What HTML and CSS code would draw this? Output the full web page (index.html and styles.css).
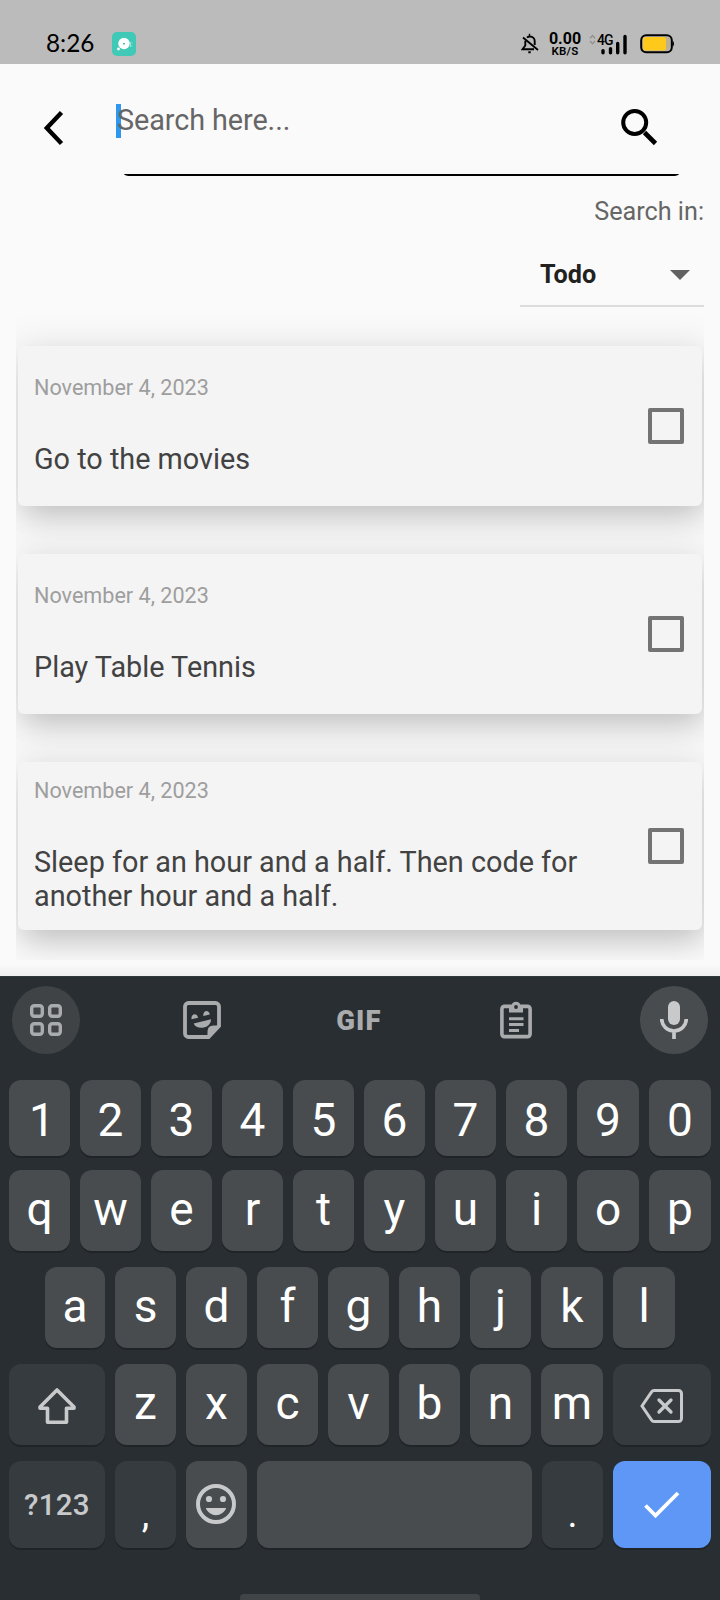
FILE: index.html
```html
<!DOCTYPE html>
<html lang="en">
<head>
<meta charset="utf-8">
<title>Search</title>
<link rel="stylesheet" href="styles.css">
</head>
<body>
<div class="status">
  <span class="clock">8:26</span>
  <svg class="app-badge" width="24" height="24" viewBox="0 0 24 24"><rect width="24" height="24" rx="5" fill="#40c9b7"/><circle cx="12" cy="11.500" r="5.700" fill="#fff"/><circle cx="6.500" cy="17" r="1.400" fill="#fff"/><rect x="11" y="11" width="2" height="1.500" fill="#40c9b7"/><path d="M18.500 10v5M20 10.500v1M20 13.500v1" stroke="#9be3da" stroke-width="1"/></svg>
  <svg class="bell" width="18" height="22" viewBox="0 0 18 22" fill="none" stroke="#000" stroke-width="1.900"><path d="M6 4.600C6.800 3.800 7.800 3.500 9 3.500c2.800 0 4.700 2 4.700 4.700v3.800M4.300 7.800v4.700L1.500 16.300H13M2 4.600 17 17M7.800 1.800h1.400M7.300 19.300h2.400"/></svg>
  <div class="speed"><b>0.00</b><small>KB/S</small></div>
  <svg class="updown" width="7" height="12" viewBox="0 0 7 12" fill="none" stroke="#909090" stroke-width="1.400"><path d="M1 4.200 3.500 1.500 6 4.200M1 7 3.500 9.700 6 7"/></svg>
  <div class="signal"><span class="net">4G</span>
    <svg width="30" height="22" viewBox="0 0 30 22"><path d="M6 19.800v-2.200M13.500 19.800v-4M20.700 19.800V10.500M28 19.800V3.500" stroke="#000" stroke-width="3.400" stroke-linecap="round"/></svg></div>
  <svg class="battery" width="35" height="20" viewBox="0 0 35 20"><rect x="1.200" y="1.200" width="30.600" height="17" rx="5" fill="none" stroke="#000" stroke-width="2"/><rect x="3" y="3" width="27" height="13.500" rx="3" fill="#bba66a" opacity=".5"/><rect x="3" y="3" width="23" height="13.500" rx="2.500" fill="#ffc91c"/><path d="M32.500 7c2 .5 2 5 0 5.500z"/></svg>
</div>

<main class="app">
  <header class="searchbar">
    <svg class="back" width="22" height="36" viewBox="0 0 22 36" fill="none" stroke="#000" stroke-width="4.400"><path d="M18.500 2.500 3.800 18 18.500 33.500"/></svg>
    <div class="field"><div class="input"><i class="caret"></i>Search here...</div><div class="underline"></div></div>
    <svg class="lens" width="38" height="38" viewBox="0 0 38 38" fill="none" stroke="#000" stroke-width="4"><circle cx="14.700" cy="14.500" r="11.500"/><path d="m24.500 24.500 11 11" stroke-width="4.600"/></svg>
  </header>
  <div class="scope">Search in:</div>
  <div class="select"><span>Todo</span><svg width="20" height="10" viewBox="0 0 20 10"><path d="M0 0h20L10 10z" fill="#616161"/></svg></div>
  <section class="list">
    <article class="card"><div><time>November 4, 2023</time><p>Go to the movies</p></div><i class="check"></i></article>
    <article class="card"><div><time>November 4, 2023</time><p>Play Table Tennis</p></div><i class="check"></i></article>
    <article class="card long"><div><time>November 4, 2023</time><p>Sleep for an hour and a half. Then code for another hour and a half.</p></div><i class="check"></i></article>
  </section>
</main>

<section class="keyboard">
  <div class="tools">
    <div class="tool round dim"><svg width="32" height="32" viewBox="0 0 32 32" fill="none" stroke="#a9abad" stroke-width="3.400"><rect x="1.700" y="1.700" width="10.600" height="10.600" rx="2.500"/><rect x="19.700" y="1.700" width="10.600" height="10.600" rx="2.500"/><rect x="1.700" y="19.700" width="10.600" height="10.600" rx="2.500"/><rect x="19.700" y="19.700" width="10.600" height="10.600" rx="2.500"/></svg></div>
    <div class="tool sticker"><svg width="38" height="38" viewBox="0 0 38 38"><path d="M5.500 2h27a3.500 3.500 0 0 1 3.500 3.500V25L25.500 36h-20A3.500 3.500 0 0 1 2 32.500v-27A3.500 3.500 0 0 1 5.500 2z" fill="none" stroke="#a9abad" stroke-width="3.800"/><path d="M24.500 37v-6.500q0-6 6-6H37zM8.500 18.300c-.7-5.800 5.500-6.800 6.600-1.500zM20.300 15c-.5-6.500 6-6.500 6.500-1.600zM10.700 22.600 28 18.200c.3 9.500-14.500 11.500-17.300 4.400z" fill="#a9abad"/></svg></div>
    <div class="tool gif">GIF</div>
    <div class="tool clip"><svg width="32" height="38" viewBox="0 0 32 38"><rect x="1.900" y="5.400" width="28.200" height="30.200" rx="2.500" fill="none" stroke="#a9abad" stroke-width="3.600"/><path d="M9 4.500h2.500a4.600 4.600 0 0 1 9 0H23v7H9zM9 16.200h14.500v3H9zM9 22h14.500v3H9zM9 28h10v3H9z" fill="#a9abad"/><circle cx="16" cy="6" r="1.900" fill="#292e32"/></svg></div>
    <div class="tool round"><svg width="28" height="40" viewBox="0 0 28 40"><rect x="8" y="1" width="12" height="24" rx="6" fill="#c8c9cb"/><path d="M1.700 19a12.300 12 0 0 0 24.600 0M14 31v8" fill="none" stroke="#c8c9cb" stroke-width="3.700"/></svg></div>
  </div>
  <div class="row digits"><b class="one">1</b><b>2</b><b>3</b><b>4</b><b>5</b><b>6</b><b>7</b><b>8</b><b class="wide">9</b><b class="wide">0</b></div>
  <div class="row"><b>q</b><b>w</b><b>e</b><b>r</b><b>t</b><b>y</b><b>u</b><b>i</b><b class="wide">o</b><b class="wide">p</b></div>
  <div class="row inset"><b class="narrow">a</b><b>s</b><b>d</b><b>f</b><b>g</b><b>h</b><b>j</b><b class="wide">k</b><b class="wide">l</b></div>
  <div class="row">
    <b class="side"><svg width="40" height="38" viewBox="0 0 40 38" fill="none" stroke="#c8c9cb" stroke-width="3.600" stroke-linejoin="round"><path d="M20 3 3 20v1.200h7.500V35.300h19V21.200H37V20z" /></svg></b>
    <b>z</b><b>x</b><b>c</b><b>v</b><b>b</b><b>n</b><b class="wide">m</b>
    <b class="side right"><svg width="44" height="36" viewBox="0 0 44 36" fill="none" stroke="#c8c9cb" stroke-width="3"><path d="M14 2.500h24.500a3 3 0 0 1 3 3v25a3 3 0 0 1-3 3H14q-1.500 0-2.400-1.300L2 18l9.600-14.200Q12.500 2.500 14 2.500z"/><path d="m19 12 12 12M31 12 19 24" stroke-width="3.300" stroke-linecap="round"/></svg></b>
  </div>
  <div class="row last">
    <b class="side sym">?123</b><b class="punct">,</b>
    <b class="emoji"><svg width="40" height="40" viewBox="0 0 40 40"><circle cx="20" cy="20" r="18" fill="none" stroke="#c8c9cb" stroke-width="4"/><g fill="#c8c9cb"><circle cx="13" cy="15" r="3.100"/><circle cx="27" cy="15" r="3.100"/><path d="M9.800 24h20.400c-3.500 9.500-16.900 9.500-20.400 0z"/></g></svg></b>
    <b class="space"></b><b class="punct">.</b>
    <b class="side right enter"><svg width="36" height="28" viewBox="0 0 36 28" fill="none" stroke="#fff" stroke-width="3.800"><path d="m1.500 14.500 10 10L34 2"/></svg></b>
  </div>
  <div class="home"></div>
</section>
</body>
</html>
```
FILE: styles.css
```css
* { box-sizing: border-box; }
body { margin: 0; width: 720px; height: 1600px; overflow: hidden; background: #fafafa; font-family: Roboto, sans-serif; display: flex; flex-direction: column; }
svg { display: block; flex: none; }

.status { height: 64px; flex: none; background: #bbb; display: flex; align-items: flex-start; color: #000; }
.clock { font: 24.3px/30px Lato, sans-serif; width: 66px; margin: 28px 0 0 46px; white-space: nowrap; }
.app-badge { margin-top: 32px; }
.bell { margin: 33px 0 0 385px; }
.speed { margin: 31px 0 0 9px; width: 34px; display: flex; flex-direction: column; align-items: center; }
.speed b { font-size: 16px; line-height: 15px; }
.speed small { font-size: 11.5px; line-height: 11px; font-weight: 600; letter-spacing: .2px; }
.updown { margin: 34px 0 0 7px; }
.signal { position: relative; margin: 33px 0 0; padding-left: 1px; }
.net { position: absolute; left: 1px; top: 0; font-size: 14px; line-height: 15px; font-weight: 500; letter-spacing: -1px; }
.battery { margin: 34px 0 0 13px; }

.app { height: 912px; flex: none; display: flex; flex-direction: column; background: linear-gradient(#fafafa 900px, #efefef); }
.searchbar { height: 112px; flex: none; display: flex; align-items: flex-start; }
.back { margin: 46px 0 0 43px; }
.field { width: 572px; margin: 39px 0 0 51px; }
.input { display: flex; height: 71px; padding-top: 1px; font-size: 28.8px; line-height: 33px; letter-spacing: -.08px; color: #666; white-space: nowrap; }
.caret { width: 5px; height: 34px; margin-right: -4px; background: #2f97f0; }
.underline { width: 555px; height: 2px; margin-left: 8px; background: #000; border-radius: 0 0 7px 7px / 0 0 2px 2px; }
.lens { margin: 44px 0 0 -68px; }
.scope { height: 60px; padding: 21px 16px 0 0; text-align: right; font-size: 25.2px; line-height: 30px; color: #666; }
.select { width: 184px; height: 71px; align-self: flex-end; margin-right: 16px; padding: 7px 14px 0 20px; border-bottom: 2px solid #dcdcdc; display: flex; align-items: center; justify-content: space-between; font-size: 25.2px; font-weight: 700; color: #212121; }
.select span { margin-top: 1px; }
.select svg { margin-top: 1px; }
.list { margin: 0 16px; height: 653px; padding: 39px 2px 0; overflow: hidden; display: flex; flex-direction: column; gap: 48px; }
.card { height: 160px; flex: none; padding: 29px 18px 0 16px; border-radius: 6px; background: #f4f4f4; display: flex; justify-content: space-between; box-shadow: 3px 14px 26px -6px rgba(0,0,0,.13), 2px 8px 38px 5px rgba(0,0,0,.13); }
.card time { display: block; font-size: 21.6px; line-height: 26px; color: #9e9e9e; }
.card p { width: 570px; margin: 41px 0 0; font-size: 28.8px; line-height: 34px; color: #424242; }
.card.long { height: 168px; padding-top: 16px; }
.check { width: 36px; height: 36px; flex: none; margin-top: 33px; border: 4px solid #737373; border-radius: 2px; }
.long .check { margin-top: 50px; }

.keyboard { height: 624px; flex: none; background: #292e32; border-top: 1px solid #303a39; display: flex; flex-direction: column; }
.tools { height: 103px; flex: none; padding: 9px 12px 0; display: flex; justify-content: space-between; }
.tool { width: 68px; height: 68px; display: flex; align-items: center; justify-content: center; }
.round { border-radius: 50%; background: #484c4e; }
.dim { background: #3f4345; }
.sticker, .clip { padding-right: 2px; }
.gif { padding-right: 2px; font-size: 27.5px; font-weight: 900; letter-spacing: 1.2px; color: #a9abad; }
.row { height: 81px; flex: none; margin: 0 9px 16px; display: flex; gap: 10px; }
.row b { width: 61px; flex: none; padding-bottom: 4px; display: flex; align-items: center; justify-content: center; background: #484c4e; border-radius: 12px; box-shadow: 0 2px 0 #1f2427; font-size: 46px; line-height: 54px; font-weight: 400; color: #fff; }
.row .wide { width: 62px; }
.row .narrow { width: 60px; }
.digits { height: 76px; margin-bottom: 14px; }
.row.digits b { padding: 3px 0 0; }
.row.digits .one { padding-left: 5px; }
.inset { padding-left: 36px; }
.row .side { width: 96px; padding: 2px 0 0; background: #363b3f; }
.row .right { width: 98px; }
.last { height: 87px; margin-bottom: 46px; }
.row .sym { padding: 0; font-size: 29.5px; font-weight: 500; color: #c8c9cb; letter-spacing: .3px; }
.row .punct { background: #363b3f; font-size: 38px; padding: 18px 0 0; }
.row .emoji { padding: 0 2px 1px 0; }
.row .space { width: 275px; }
.row .enter { background: #5e97f6; padding: 0; }
.home { width: 240px; height: 12px; flex: none; margin: 0 auto; border-radius: 4px; background: #414447; }
```
